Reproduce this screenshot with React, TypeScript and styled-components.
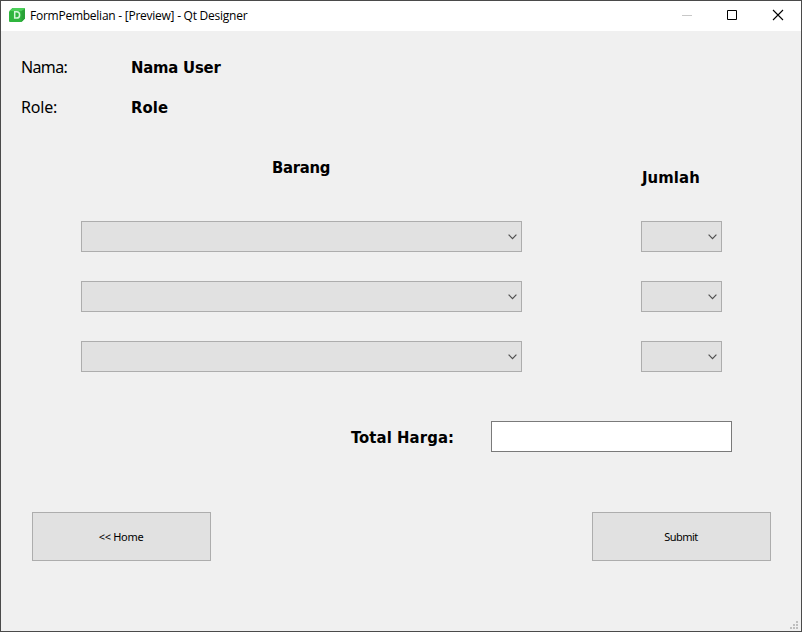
import React from "react";
import styled, { createGlobalStyle } from "styled-components";

const GlobalStyle = createGlobalStyle`
  * { box-sizing: border-box; }
  html, body { margin: 0; padding: 0; overflow: hidden; }
`;

const Window = styled.div`
  width: 802px;
  height: 632px;
  display: flex;
  flex-direction: column;
  border: 1px solid #4a4a4a;
  background: #f0f0f0;
  color: #000;
  font-family: "Noto Sans", "Open Sans", sans-serif;
`;

const TitleBar = styled.header`
  flex: 0 0 30px;
  display: flex;
  align-items: center;
  padding-left: 8px;
  background: #fff;
`;

const AppIcon = styled.svg`
  width: 16px;
  height: 16px;
  flex: none;
  margin-right: 5px;
  margin-top: -2px;
`;

const Title = styled.div`
  flex: 1;
  font: 12px/16px "Open Sans", "Noto Sans", sans-serif;
  letter-spacing: -0.25px;
  white-space: nowrap;
`;

const WindowButton = styled.button`
  width: 46px;
  height: 30px;
  padding: 0;
  border: 0;
  background: transparent;
  display: flex;
  align-items: center;
  justify-content: center;
`;

const Glyph = styled.svg`
  width: 12px;
  height: 12px;
  margin-top: -2px;
`;

const Form = styled.main`
  flex: 1;
  display: flex;
  flex-direction: column;
  padding: 21px 30px 0 20px;
`;

const InfoRow = styled.div`
  display: grid;
  grid-template-columns: 110px 1fr;
  height: 30px;
  margin-bottom: 10px;
  align-items: center;
`;

const Label = styled.span<{ $spacing?: number }>`
  font-size: 16px;
  line-height: 22px;
  letter-spacing: ${(p) => p.$spacing ?? 0}px;
  white-space: nowrap;
`;

const Heading = styled(Label)`
  padding-top: 2px;
  font-family: "DejaVu Sans Condensed", "Noto Sans", sans-serif;
  font-size: 16.5px;
  font-stretch: condensed;
  font-weight: 700;
`;

const ItemGrid = styled.div`
  display: grid;
  grid-template-columns: 441px 81px;
  column-gap: 119px;
  row-gap: 29px;
  margin: 19px 0 0 60px;
`;

const ColumnTitle = styled.div<{ $left: number; $top: number }>`
  height: 31px;
  display: flex;
  align-items: center;
  padding-left: ${(p) => p.$left}px;
  margin: ${(p) => p.$top}px 0 ${(p) => 10 - p.$top}px;
`;

const Combo = styled.button`
  height: 31px;
  padding: 0 4px 0 0;
  display: flex;
  align-items: center;
  justify-content: flex-end;
  background: #e1e1e1;
  border: 1px solid #adadad;
  border-radius: 0;
`;

const Chevron = styled.svg`
  width: 9px;
  height: 6px;
  margin-top: 1px;
`;

const TotalRow = styled.div`
  display: flex;
  align-items: center;
  height: 31px;
  margin: 49px 0 0 330px;
`;

const TotalLabel = styled.div`
  flex: 0 0 140px;
  display: flex;
`;

const TotalInput = styled.input`
  width: 241px;
  height: 31px;
  border: 1px solid #7a7a7a;
  background: #fff;
  outline: none;
`;

const Actions = styled.div`
  display: flex;
  justify-content: space-between;
  margin: 60px 0 0 11px;
`;

const PushButton = styled.button<{ $spacing: number }>`
  width: 179px;
  height: 49px;
  padding: 1px 1px 0 0;
  background: #e1e1e1;
  border: 1px solid #adadad;
  border-radius: 0;
  color: #000;
  font: 11px/16px "Noto Sans", "Open Sans", sans-serif;
  letter-spacing: ${(p) => p.$spacing}px;
`;

const StatusBar = styled.footer`
  display: flex;
  justify-content: flex-end;
  padding: 0 3px 2px 0;
`;

const Grip = styled.svg`
  width: 8px;
  height: 8px;
  display: block;
`;

const ComboBox = ({ label }: { label: string }) => (
  <Combo aria-label={label}>
    <Chevron viewBox="0 0 9 6">
      <path d="M0.6 0.7 4.5 4.6 8.4 0.7" fill="none" stroke="#505050" strokeWidth="1.2" />
    </Chevron>
  </Combo>
);

const gripDots = [[6, 0], [3, 3], [6, 3], [0, 6], [3, 6], [6, 6]];

export default function App() {
  return (
    <>
      <GlobalStyle />
      <Window>
        <TitleBar>
          <AppIcon viewBox="0 0 16 16">
            <path d="M3.5 1H15Q16 1 16 2V11.5L12.5 15H1Q0 15 0 14V4.5Z" fill="#2fb53e" />
            <path d="M3.5 1H15Q16 1 16 2L13 4H0.5Z" fill="#4bcf59" />
            <path d="M16 2V11.5L12.5 15V4Z" fill="#2aa238" />
            <path d="M5.7 4.8H7.6C9.7 4.8 10.6 6 10.6 7.9S9.7 11.1 7.6 11.1H5.7Z" fill="none" stroke="#d4f7d9" strokeWidth="1.5" />
          </AppIcon>
          <Title>FormPembelian - [Preview] - Qt Designer</Title>
          <WindowButton aria-label="Minimize">
            <Glyph viewBox="0 0 12 12"><path d="M2 6.5H12" stroke="#c8c8c8" /></Glyph>
          </WindowButton>
          <WindowButton aria-label="Maximize">
            <Glyph viewBox="0 0 12 12"><path d="M1.5 1.5H10.5V10.5H1.5Z" fill="none" stroke="#000" /></Glyph>
          </WindowButton>
          <WindowButton aria-label="Close">
            <Glyph viewBox="0 0 12 12"><path d="M1 1 11 11M11 1 1 11" stroke="#000" strokeWidth="1.1" /></Glyph>
          </WindowButton>
        </TitleBar>
        <Form>
          <InfoRow>
            <Label $spacing={-0.65}>Nama:</Label>
            <Heading $spacing={-0.2}>Nama User</Heading>
          </InfoRow>
          <InfoRow>
            <Label $spacing={-0.2}>Role:</Label>
            <Heading $spacing={0.1}>Role</Heading>
          </InfoRow>
          <ItemGrid>
            <ColumnTitle $left={191} $top={0}><Heading $spacing={-0.3}>Barang</Heading></ColumnTitle>
            <ColumnTitle $left={1} $top={10}><Heading $spacing={0.1}>Jumlah</Heading></ColumnTitle>
            {[1, 2, 3].map((n) => (
              <React.Fragment key={n}>
                <ComboBox label={`Barang ${n}`} />
                <ComboBox label={`Jumlah ${n}`} />
              </React.Fragment>
            ))}
          </ItemGrid>
          <TotalRow>
            <TotalLabel><Heading $spacing={0.1}>Total Harga:</Heading></TotalLabel>
            <TotalInput aria-label="Total Harga" />
          </TotalRow>
          <Actions>
            <PushButton $spacing={-0.3}>&lt;&lt; Home</PushButton>
            <PushButton $spacing={-0.55}>Submit</PushButton>
          </Actions>
        </Form>
        <StatusBar>
          <Grip viewBox="0 0 8 8">
            {gripDots.map(([x, y]) => (
              <rect key={`${x}-${y}`} x={x} y={y} width="2" height="2" fill="#bfbfbf" />
            ))}
          </Grip>
        </StatusBar>
      </Window>
    </>
  );
}
